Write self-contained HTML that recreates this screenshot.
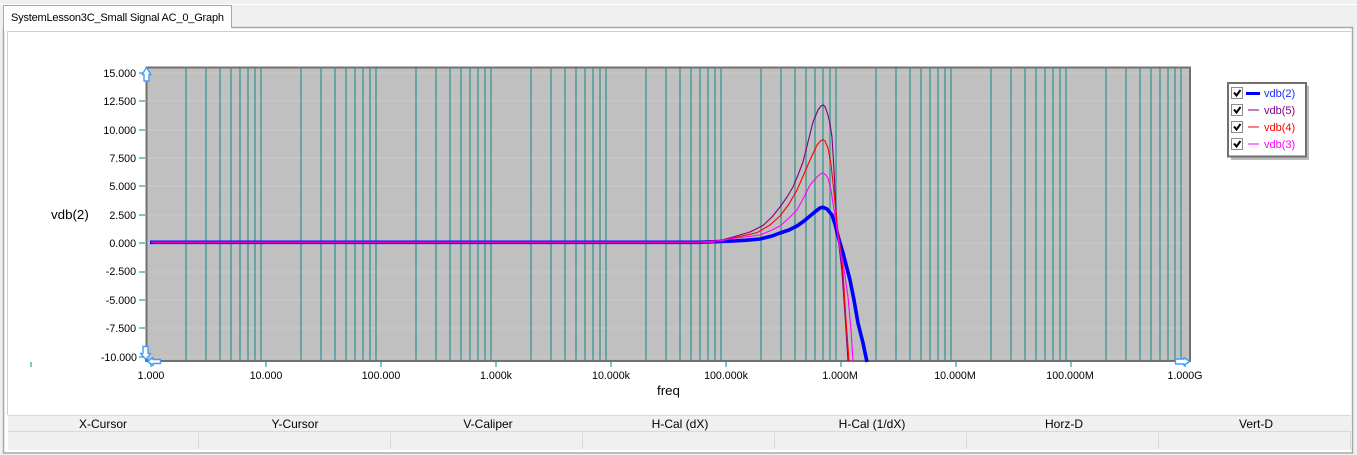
<!DOCTYPE html>
<html><head><meta charset="utf-8"><style>
html,body{margin:0;padding:0;background:#f0f0f0;width:1357px;height:455px;overflow:hidden}
svg{display:block}
text{font-family:"Liberation Sans",Arial,sans-serif;fill:#000}
.f{font-size:12px;text-anchor:middle}
.l{font-size:10.67px;text-anchor:middle}
.y{font-size:10.67px;text-anchor:end}
</style></head><body>
<svg width="1357" height="455" viewBox="0 0 1357 455" xmlns="http://www.w3.org/2000/svg">
<defs>
<g id="d" fill="#66a3a3">
<rect x="185" y="68" width="2" height="292"/><rect x="205" y="68" width="2" height="292"/><rect x="219" y="68" width="2" height="292"/><rect x="230" y="68" width="2" height="292"/><rect x="239" y="68" width="2" height="292"/><rect x="247" y="68" width="2" height="292"/><rect x="254" y="68" width="2" height="292"/><rect x="260" y="68" width="2" height="292"/>
</g>
</defs>
<rect width="1357" height="455" fill="#f0f0f0"/>
<rect x="0" y="4" width="1357" height="1" fill="#fff"/>
<!-- panel -->
<rect x="3.500" y="27.500" width="1349" height="425.500" fill="#fff" stroke="#a8a8a8" stroke-width="1.500"/>
<rect x="7" y="31" width="1344" height="1" fill="#cfcfcf"/>
<rect x="7" y="31" width="1" height="384" fill="#cfcfcf"/>
<!-- tab -->
<path d="M3.500 28V5.500H231.500V27" fill="#fff" stroke="#a8a8a8"/>
<rect x="4" y="6" width="227" height="24" fill="#fff"/>
<rect x="7" y="31" width="1" height="2" fill="#cfcfcf"/>
<text x="11" y="21" font-size="11" textLength="213" lengthAdjust="spacing">SystemLesson3C_Small Signal AC_0_Graph</text>
<!-- plot -->
<rect x="147" y="68" width="1043" height="293" fill="#c0c0c0"/>
<use href="#d"/><use href="#d" x="115"/><use href="#d" x="230"/><use href="#d" x="345"/><use href="#d" x="460"/><use href="#d" x="575"/><use href="#d" x="690"/><use href="#d" x="805"/><use href="#d" x="920"/>
<g fill="#fff" fill-opacity=".07">
<rect x="147" y="72" width="1043" height="2"/><rect x="147" y="100" width="1043" height="2"/><rect x="147" y="129" width="1043" height="2"/><rect x="147" y="157" width="1043" height="2"/><rect x="147" y="185" width="1043" height="2"/><rect x="147" y="214" width="1043" height="2"/><rect x="147" y="242" width="1043" height="2"/><rect x="147" y="271" width="1043" height="2"/><rect x="147" y="299" width="1043" height="2"/><rect x="147" y="327" width="1043" height="2"/><rect x="147" y="356" width="1043" height="2"/>
</g>
<path d="M146.500 361V67.500H1190V361H146" fill="none" stroke="#707070" stroke-width="2"/>
<!-- y ticks -->
<g fill="#80c4c4">
<rect x="139" y="72" width="6" height="2"/><rect x="139" y="100" width="6" height="2"/><rect x="139" y="129" width="6" height="2"/><rect x="139" y="157" width="6" height="2"/><rect x="139" y="185" width="6" height="2"/><rect x="139" y="214" width="6" height="2"/><rect x="139" y="242" width="6" height="2"/><rect x="139" y="271" width="6" height="2"/><rect x="139" y="299" width="6" height="2"/><rect x="139" y="327" width="6" height="2"/><rect x="139" y="356" width="6" height="2"/>
<rect x="150" y="362" width="2" height="5"/><rect x="265" y="362" width="2" height="5"/><rect x="380" y="362" width="2" height="5"/><rect x="495" y="362" width="2" height="5"/><rect x="610" y="362" width="2" height="5"/><rect x="725" y="362" width="2" height="5"/><rect x="840" y="362" width="2" height="5"/><rect x="955" y="362" width="2" height="5"/><rect x="1070" y="362" width="2" height="5"/><rect x="1184" y="362" width="2" height="5"/>
<rect x="30" y="362" width="2" height="5"/>
</g>
<text class="y" x="136" y="77">15.000</text><text class="y" x="136" y="105">12.500</text><text class="y" x="136" y="134">10.000</text><text class="y" x="136" y="162">7.500</text><text class="y" x="136" y="190">5.000</text><text class="y" x="136" y="219">2.500</text><text class="y" x="136" y="247">0.000</text><text class="y" x="136" y="275">-2.500</text><text class="y" x="136" y="304">-5.000</text><text class="y" x="136" y="332">-7.500</text><text class="y" x="137" y="361">-10.000</text>
<text class="l" x="151" y="379">1.000</text><text class="l" x="266" y="379">10.000</text><text class="l" x="381" y="379">100.000</text><text class="l" x="496" y="379">1.000k</text><text class="l" x="611" y="379">10.000k</text><text class="l" x="726" y="379">100.000k</text><text class="l" x="840" y="379">1.000M</text><text class="l" x="955" y="379">10.000M</text><text class="l" x="1070" y="379">100.000M</text><text class="l" x="1185" y="379">1.000G</text>
<text x="51" y="219" font-size="13.330">vdb(2)</text>
<text x="657" y="395" font-size="13.330">freq</text>
<!-- curves -->
<g fill="none" stroke-linejoin="round" stroke-linecap="butt">
<polyline stroke="#0000ff" stroke-width="3.600" points="150,242.300 700,242.300 733,241 745,240.300 760,239 772,236 780,233 789,230 797,226 804,221 810,216 816,211 820,208 823,207.300 827,209 832,215 835,224 838,236 843,253 850,280 854,300 858,323 863,343 867,362"/>
<polyline stroke="#800080" stroke-width="1.100" points="151,242 700,242 720,240.500 733,237 750,232 763,225.500 772,217 780,207 787,197 793,187 798,175 803,162 808,142 813,122 818,110 821,106 823,105 825,106.500 828,115 830,124 832,137 834,170 836,210 838,237 842,272 845,315 848,361"/>
<polyline stroke="#ff0000" stroke-width="1.100" points="151,242 700,242 720,240.700 733,238 757,232.700 770,225 780,216 789,204 797,190 804,174 810,160 817,145 821,140.500 823,139.700 825,141 828,148 831,164 833,183 836,212 838,233 841,252 843,273 846,320 849,361"/>
<polyline stroke="#ff00ff" stroke-width="1.100" points="151,242 700,242 720,240.800 733,238.500 760,235 772,230 780,226 789,218 797,210 804,197 810,185 817,177 821,173.500 823,173 826,175 828,178 831,190 833,203 836,222 838,237 840,250 843,262 848,297 851,330 853,361"/>
<polyline stroke="#e000c8" stroke-width="1.800" points="151,242.300 715,242.300"/>
</g>
<!-- handles -->
<g fill="#fff" stroke="#429bff" stroke-width="1.400" stroke-linejoin="round">
<path d="M146.500 67.500L151 74.500H149V81H144V74.500H142Z"/>
<path d="M143 346.500H148V353.500H150.500L146 359.500L140.500 353.500H143Z"/>
<path d="M147.500 361.500L153 357.500V359.500H160.500V363.500H153V365.500Z"/>
<path d="M1189.500 361.500L1184 357.500V359H1175.500V364H1184V365.500Z"/>
</g>
<rect x="145" y="359" width="3" height="3" fill="#2c80e8"/>
<!-- legend -->
<rect x="1231" y="86" width="78" height="74" fill="#bcbcbc"/>
<rect x="1228" y="83" width="78" height="73.500" fill="#fff" stroke="#707070" stroke-width="2"/>
<g fill="#fff" stroke="#8c8c8c">
<rect x="1231.500" y="87.500" width="11" height="11"/><rect x="1231.500" y="104.500" width="11" height="11"/><rect x="1231.500" y="121.500" width="11" height="11"/><rect x="1231.500" y="138.500" width="11" height="11"/>
</g>
<g fill="none" stroke="#000" stroke-width="2">
<path d="M1234 92.500L1236.500 95.500L1240.500 90"/><path d="M1234 109.500L1236.500 112.500L1240.500 107"/><path d="M1234 126.500L1236.500 129.500L1240.500 124"/><path d="M1234 143.500L1236.500 146.500L1240.500 141"/>
</g>
<rect x="1246" y="92" width="14" height="3" fill="#0000ff"/>
<rect x="1248" y="109" width="11" height="2" fill="#c080c0"/>
<rect x="1248" y="126" width="11" height="2" fill="#ff8080"/>
<rect x="1248" y="143" width="11" height="2" fill="#ff80ff"/>
<text x="1264" y="97" style="fill:#1a2cff" font-size="11">vdb(2)</text>
<text x="1264" y="114" style="fill:#800080" font-size="11">vdb(5)</text>
<text x="1264" y="131" style="fill:#ff0000" font-size="11">vdb(4)</text>
<text x="1264" y="148" style="fill:#ff00ff" font-size="11">vdb(3)</text>
<!-- footer -->
<rect x="8" y="415" width="1343" height="35" fill="#f0f0f0"/>
<rect x="8" y="415" width="1343" height="1" fill="#d9d9d9"/>
<rect x="8" y="431" width="1343" height="1" fill="#d9d9d9"/>
<g fill="#d9d9d9">
<rect x="198" y="433" width="1" height="16"/><rect x="390" y="433" width="1" height="16"/><rect x="582" y="433" width="1" height="16"/><rect x="774" y="433" width="1" height="16"/><rect x="966" y="433" width="1" height="16"/><rect x="1158" y="433" width="1" height="16"/><rect x="1350" y="433" width="1" height="16"/>
</g>
<text class="f" x="103" y="428">X-Cursor</text><text class="f" x="295" y="428">Y-Cursor</text><text class="f" x="488" y="428">V-Caliper</text><text class="f" x="680" y="428">H-Cal (dX)</text><text class="f" x="872" y="428">H-Cal (1/dX)</text><text class="f" x="1064" y="428">Horz-D</text><text class="f" x="1256" y="428">Vert-D</text>
</svg>
</body></html>
